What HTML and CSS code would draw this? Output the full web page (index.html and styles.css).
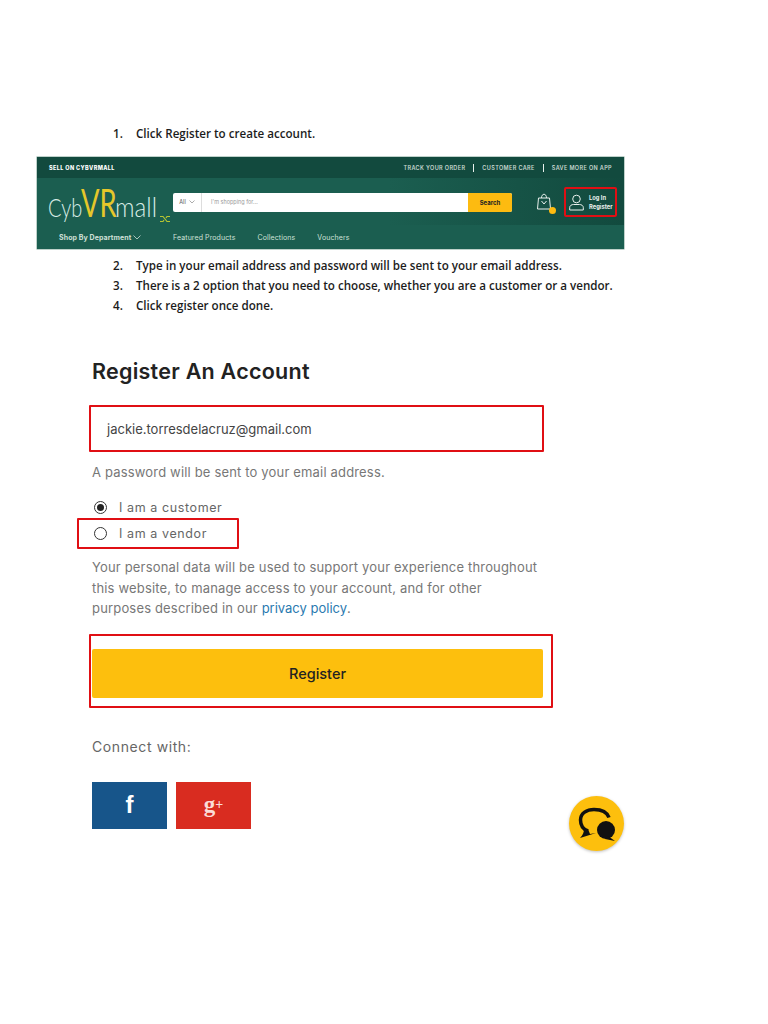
FILE: index.html
```html
<!DOCTYPE html>
<html lang="en">
<head>
    <meta charset="UTF-8">
    <meta name="viewport" content="width=device-width, initial-scale=1.0">
    <title>Register An Account</title>
    <link rel="stylesheet" href="styles.css">
</head>
<body>
    <div class="steps first">
        <div class="step"><span class="num">1.</span><span>Click Register to create account.</span></div>
    </div>

    <div class="banner">
        <div class="banner-top">
            <span class="sell">SELL ON CYBVRMALL</span>
            <div class="top-links">
                <span>TRACK YOUR ORDER</span>
                <i></i>
                <span>CUSTOMER CARE</span>
                <i></i>
                <span>SAVE MORE ON APP</span>
            </div>
        </div>
        <div class="banner-main">
            <div class="logo">
                <span class="logo-cyb">Cyb</span><span class="logo-vr">VR</span><span class="logo-mall">mall</span>
                <svg class="logo-arrow" width="11" height="8" viewBox="0 0 11 8"><path d="M0 1.500h3l4 5h3M0 6.500h3l1-1.500M6 3l1-1.500h3" fill="none" stroke="#b7c531" stroke-width="1.200"/></svg>
            </div>
            <div class="search">
                <div class="search-cat">All <svg width="6" height="4" viewBox="0 0 6 4"><path d="M.5.5 3 3 5.500.5" fill="none" stroke="#888" stroke-width=".7"/></svg></div>
                <div class="search-input">I'm shopping for...</div>
                <div class="search-btn">Search</div>
            </div>
            <div class="bag">
                <svg width="17" height="18" viewBox="0 0 17 18"><path d="M2.500 5h11l1 11h-13zM5.500 5c0-5 5-5 5 0M5.500 8l2.500 3 2.500-3" fill="none" stroke="#e8f0ec" stroke-width="1"/></svg>
                <span class="bag-dot"></span>
            </div>
            <div class="login">
                <svg width="15" height="17" viewBox="0 0 15 17"><circle cx="7.500" cy="5" r="3.800" fill="none" stroke="#e8f0ec"/><path d="M.7 16v-2.500c0-2 2-3 3.800-3h6c1.800 0 3.800 1 3.800 3V16z" fill="none" stroke="#e8f0ec"/></svg>
                <div class="login-text">Log In<br>Register</div>
            </div>
        </div>
        <div class="banner-nav">
            <span class="dept">Shop By Department <svg width="8" height="5" viewBox="0 0 8 5"><path d="M.5.5 4 4 7.500.5" fill="none" stroke="#cfe0d8" stroke-width=".8"/></svg></span>
            <span class="nav-link">Featured Products</span>
            <span class="nav-link">Collections</span>
            <span class="nav-link">Vouchers</span>
        </div>
    </div>

    <div class="steps second">
        <div class="step"><span class="num">2.</span><span>Type in your email address and password will be sent to your email address.</span></div>
        <div class="step"><span class="num">3.</span><span>There is a 2 option that you need to choose, whether you are a customer or a vendor.</span></div>
        <div class="step"><span class="num">4.</span><span>Click register once done.</span></div>
    </div>

    <div class="form">
        <h1>Register An Account</h1>
        <div class="email-box">jackie.torresdelacruz@gmail.com</div>
        <p class="hint">A password will be sent to your email address.</p>
        <div class="radio-row customer">
            <span class="radio checked"></span>
            <span>I am a customer</span>
        </div>
        <div class="radio-row vendor">
            <span class="radio"></span>
            <span>I am a vendor</span>
        </div>
        <p class="policy">Your personal data will be used to support your experience throughout this website, to manage access to your account, and for other purposes described in our <a>privacy policy</a>.</p>
        <div class="register-box">
            <div class="register-btn">Register</div>
        </div>
        <p class="connect">Connect with:</p>
        <div class="social">
            <div class="social-btn fb">f</div>
            <div class="social-btn gp">g<sup>+</sup></div>
        </div>
    </div>

    <div class="chat">
        <svg width="40" height="36" viewBox="0 0 40 36">
            <path d="M11 25C5 23 3.500 18 3.500 14 3.500 7 10 3.500 17 3.500c7 0 13 2.500 15 8" fill="none" stroke="#111" stroke-width="3.500"/>
            <path d="M11 23l2 5 6-1-16 5c3-3 4-6 4-9z" fill="#111"/>
            <circle cx="29" cy="24" r="9" fill="#111"/>
            <path d="M31 30l7 5-10-2z" fill="#111"/>
        </svg>
    </div>
</body>
</html>
```
FILE: styles.css
```css
body {
    margin: 0;
    height: 1024px;
    position: relative;
    background: #fff;
    font-family: "Noto Sans", sans-serif;
    overflow: hidden;
}
.steps {
    padding-left: 113px;
    font-family: "Open Sans", sans-serif;
    font-weight: 600;
    font-size: 11.620px;
    line-height: 20px;
    color: #1c1c1c;
}
.step {
    display: flex;
}
.num {
    width: 23px;
}
.first {
    padding-top: 124px;
}
.second {
    margin-top: 7px;
}

/* banner */
.banner {
    margin: 13px 0 0 37px;
    width: 587px;
    height: 92px;
    background: #1b5e50;
    box-shadow: 0 0 0 .5px #7fa396;
    color: #e8f0ec;
    display: flex;
    flex-direction: column;
}
.banner-top {
    height: 21px;
    background: #124a3e;
    display: flex;
    align-items: center;
    justify-content: space-between;
    padding: 0 12px;
    font-family: "Inter", sans-serif;
    font-size: 5.500px;
    font-weight: 600;
    letter-spacing: .37px;
}
.sell {
    font-weight: 800;
    color: #fff;
}
.top-links {
    display: flex;
    align-items: center;
    gap: 8px;
    color: #c6d6cf;
}
.top-links i {
    width: 1px;
    height: 8px;
    background: #e8f0ec;
}
.banner-main {
    height: 47px;
    display: flex;
    align-items: center;
    padding-top: 1px;
    box-sizing: border-box;
    background: linear-gradient(90deg, #1b5e50 0%, #1b5e50 60%, #124a3e 100%);
}
.logo {
    width: 125px;
    height: 40px;
    padding-left: 11px;
    font-family: "Lato", sans-serif;
    font-weight: 300;
    font-size: 25px;
    color: #d8ece6;
    white-space: nowrap;
    position: relative;
    display: flex;
    align-items: baseline;
}
.logo span {
    display: inline-block;
    transform-origin: left center;
}
.logo-cyb {
    width: 33px;
    transform: scaleX(.8);
}
.logo-vr {
    width: 34px;
    color: #e6c72a;
    font-size: 38px;
    font-weight: 400;
    line-height: 40px;
    transform: scaleX(.72);
}
.logo-mall {
    width: 37px;
    font-size: 27px;
    transform: scaleX(.9);
}
.logo-arrow {
    position: absolute;
    right: 2px;
    bottom: -1px;
}
.search {
    width: 339px;
    height: 19px;
    display: flex;
    background: #fff;
    border-radius: 2px;
    font-family: "Inter", sans-serif;
    font-size: 5.500px;
    overflow: hidden;
}
.search-cat {
    width: 29px;
    display: flex;
    align-items: center;
    justify-content: center;
    gap: 3px;
    color: #555;
    border-right: 1px solid #ddd;
    box-sizing: border-box;
}
.search-input {
    flex: 1;
    display: flex;
    align-items: center;
    padding-left: 9px;
    color: #999;
}
.search-btn {
    width: 44px;
    display: flex;
    align-items: center;
    justify-content: center;
    background: #fdbb10;
    color: #222;
    font-weight: 700;
    font-size: 6px;
}
.bag {
    position: relative;
    margin-left: 24px;
    width: 17px;
    height: 18px;
}
.bag-dot {
    position: absolute;
    right: -3px;
    bottom: -3px;
    width: 7px;
    height: 7px;
    border-radius: 50%;
    background: #fdbb10;
}
.login {
    margin-left: 11px;
    width: 53px;
    height: 30px;
    border: 2.500px solid #e00f14;
    border-radius: 2px;
    box-sizing: border-box;
    display: flex;
    align-items: center;
    gap: 5px;
    padding-left: 3px;
}
.login-text {
    font-family: "Inter", sans-serif;
    font-weight: 700;
    font-size: 5.800px;
    line-height: 9px;
}
.banner-nav {
    flex: 1;
    display: flex;
    align-items: center;
    padding-left: 22px;
    font-family: "Inter", sans-serif;
    font-size: 7px;
    letter-spacing: .1px;
    color: #cfe0d8;
}
.dept {
    width: 114px;
    font-weight: 700;
}
.nav-link {
    margin-right: 22px;
}

/* form */
.form {
    margin: 42px 0 0 92px;
    width: 450px;
    font-family: "Inter", sans-serif;
    color: #666;
    font-size: 13px;
}
h1 {
    margin: 0;
    font-size: 21.500px;
    line-height: 26px;
    font-weight: 600;
    letter-spacing: .25px;
    color: #222;
}
.email-box {
    margin: 21px 0 0 -3px;
    width: 455px;
    height: 47px;
    box-sizing: border-box;
    border: 2.500px solid #e00f14;
    border-radius: 1px;
    display: flex;
    align-items: center;
    padding-left: 16px;
    color: #444;
}
.hint {
    margin: 12px 0 0;
    line-height: 16px;
    letter-spacing: .17px;
    color: #777;
}
.radio-row {
    display: flex;
    align-items: center;
    gap: 12px;
    height: 16px;
    padding-left: 2px;
    letter-spacing: .6px;
    font-size: 12.500px;
}
.customer {
    margin-top: 19px;
}
.radio {
    width: 13px;
    height: 13px;
    border-radius: 50%;
    border: 1px solid #333;
    box-sizing: border-box;
    display: flex;
    align-items: center;
    justify-content: center;
}
.radio.checked::after {
    content: "";
    width: 7px;
    height: 7px;
    border-radius: 50%;
    background: #222;
}
.vendor {
    margin: 3px 0 0 -15px;
    width: 162px;
    height: 31px;
    box-sizing: border-box;
    border: 2.500px solid #e00f14;
    border-radius: 1px;
    padding-left: 15px;
}
.policy {
    margin: 8px 0 0;
    width: 450px;
    line-height: 20.500px;
    letter-spacing: .17px;
    color: #777;
}
.policy a {
    letter-spacing: 0;
    color: #2a7ab0;
}
.register-box {
    margin: 15px 0 0 -3px;
    width: 464px;
    height: 74px;
    box-sizing: border-box;
    border: 2.500px solid #e00f14;
    border-radius: 1px;
    padding: 13.500px 8px 8px 1px;
}
.register-btn {
    height: 49px;
    background: #fdbf0d;
    border-radius: 2px;
    display: flex;
    align-items: center;
    justify-content: center;
    color: #222;
    font-weight: 500;
    font-size: 14.500px;
}
.connect {
    margin: 30px 0 0;
    line-height: 18px;
    font-size: 14px;
    letter-spacing: .6px;
}
.social {
    margin-top: 26px;
    display: flex;
    gap: 9px;
}
.social-btn {
    width: 75px;
    height: 47px;
    display: flex;
    align-items: center;
    justify-content: center;
    color: #fff;
    font-family: "Liberation Serif", serif;
    font-weight: 700;
}
.fb {
    background: #17558a;
    font-family: "Liberation Sans", sans-serif;
    font-size: 24px;
}
.gp {
    background: #d92c20;
    font-size: 23px;
    color: #fbdcd8;
}
.gp sup {
    font-size: 14px;
    line-height: 0;
}

/* floating chat button */
.chat {
    position: absolute;
    left: 569px;
    top: 796px;
    width: 55px;
    height: 55px;
    border-radius: 50%;
    background: #fdbf0d;
    box-shadow: 0 1px 3px rgba(0, 0, 0, .25);
    display: flex;
    align-items: center;
    justify-content: center;
}
```
